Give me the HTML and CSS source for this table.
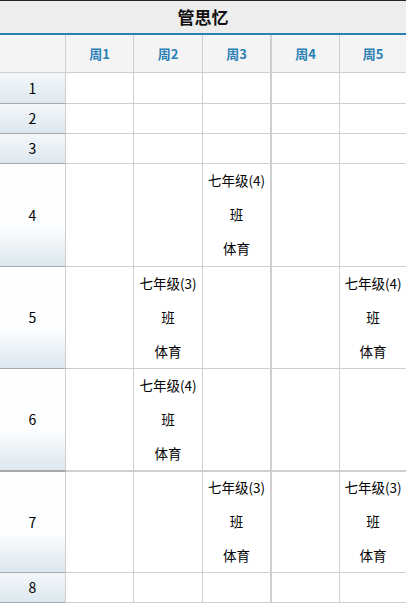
FILE: index.html
```html
<!DOCTYPE html>
<html lang="zh">
<head>
<meta charset="utf-8">
<title>管思忆</title>
<link rel="stylesheet" href="styles.css">
</head>
<body>
<div class="page">
  <div class="title">管思忆</div>
  <div class="grid">
    <div class="hd corner"></div>
    <div class="hd">周1</div>
    <div class="hd">周2</div>
    <div class="hd sep">周3</div>
    <div class="hd">周4</div>
    <div class="hd">周5</div>

    <div class="rh r-s r1">1</div>
    <div class="c r-s r1"></div><div class="c r-s r1"></div><div class="c r-s r1 sep"></div><div class="c r-s r1"></div><div class="c r-s r1"></div>

    <div class="rh r-s">2</div>
    <div class="c r-s"></div><div class="c r-s"></div><div class="c r-s sep"></div><div class="c r-s"></div><div class="c r-s"></div>

    <div class="rh r-s">3</div>
    <div class="c r-s"></div><div class="c r-s"></div><div class="c r-s sep"></div><div class="c r-s"></div><div class="c r-s"></div>

    <div class="rh r-l r4">4</div>
    <div class="c r4"></div><div class="c r4"></div>
    <div class="c r4 sep"><span>七年级(4)</span><span>班</span><span>体育</span></div>
    <div class="c r4"></div><div class="c r4"></div>

    <div class="rh r-l r5">5</div>
    <div class="c r5"></div>
    <div class="c r5"><span>七年级(3)</span><span>班</span><span>体育</span></div>
    <div class="c r5 sep"></div><div class="c r5"></div>
    <div class="c r5"><span>七年级(4)</span><span>班</span><span>体育</span></div>

    <div class="rh r-l r6 thick">6</div>
    <div class="c r6 thick"></div>
    <div class="c r6 thick"><span>七年级(4)</span><span>班</span><span>体育</span></div>
    <div class="c r6 thick sep"></div><div class="c r6 thick"></div><div class="c r6 thick"></div>

    <div class="rh r-l r7">7</div>
    <div class="c r7"></div><div class="c r7"></div>
    <div class="c r7 sep"><span>七年级(3)</span><span>班</span><span>体育</span></div>
    <div class="c r7"></div>
    <div class="c r7"><span>七年级(3)</span><span>班</span><span>体育</span></div>

    <div class="rh r-s">8</div>
    <div class="c r-s"></div><div class="c r-s"></div><div class="c r-s sep"></div><div class="c r-s"></div><div class="c r-s"></div>
  </div>
</div>
</body>
</html>
```
FILE: styles.css
```css
* { box-sizing: border-box; }
html, body { margin: 0; padding: 0; background: #fff; }
body {
  font-family: "Noto Sans CJK SC", "Noto Sans", sans-serif;
  font-size: 13px;
  color: #000;
  width: 406px;
  overflow: hidden;
}
.title {
  height: 35px;
  padding-bottom: 2px;
  border-top: 1px solid #262626;
  border-bottom: 2px solid #2a7fb5;
  background: #ededed;
  display: flex;
  align-items: center;
  justify-content: center;
  font-size: 17px;
  font-weight: bold;
  color: #111;
}
.grid {
  display: grid;
  grid-template-columns: 66px 68px 69px 69px 68px 66px;
  grid-template-rows: 38px 31px 30px 30px 103px 102px 103px 101px 30px;
}
.grid > div {
  border-right: 1px solid #cfcfcf;
  border-bottom: 1px solid #cfcfcf;
  display: flex;
  flex-direction: column;
  align-items: center;
  justify-content: center;
}
.grid > div:nth-child(6n) { border-right: none; }
.grid > .sep { border-right-width: 2px; }
.grid > .thick { border-bottom-width: 2px; }
.hd {
  background: #f4f4f4;
  color: #2a7fb5;
  font-weight: bold;
  font-size: 13px;
}
.rh {
  padding-bottom: 1px;
  background-color: #fdfeff;
  background-image: linear-gradient(to bottom, #f4f8fb, #dce7ef);
  background-repeat: no-repeat;
  background-position: bottom;
  background-size: 100% 100%;
  font-size: 14px;
}
.grid > .rh { border-bottom-color: #a8a8a8; }
.grid > .rh.r-l { background-size: 100% 40px; background-image: linear-gradient(to bottom, #fdfeff, #dce7ef); }
.grid > .c { padding-bottom: 2px; }
.c span {
  display: block;
  line-height: 34px;
  white-space: nowrap;
  font-size: 13.5px;
}
```
